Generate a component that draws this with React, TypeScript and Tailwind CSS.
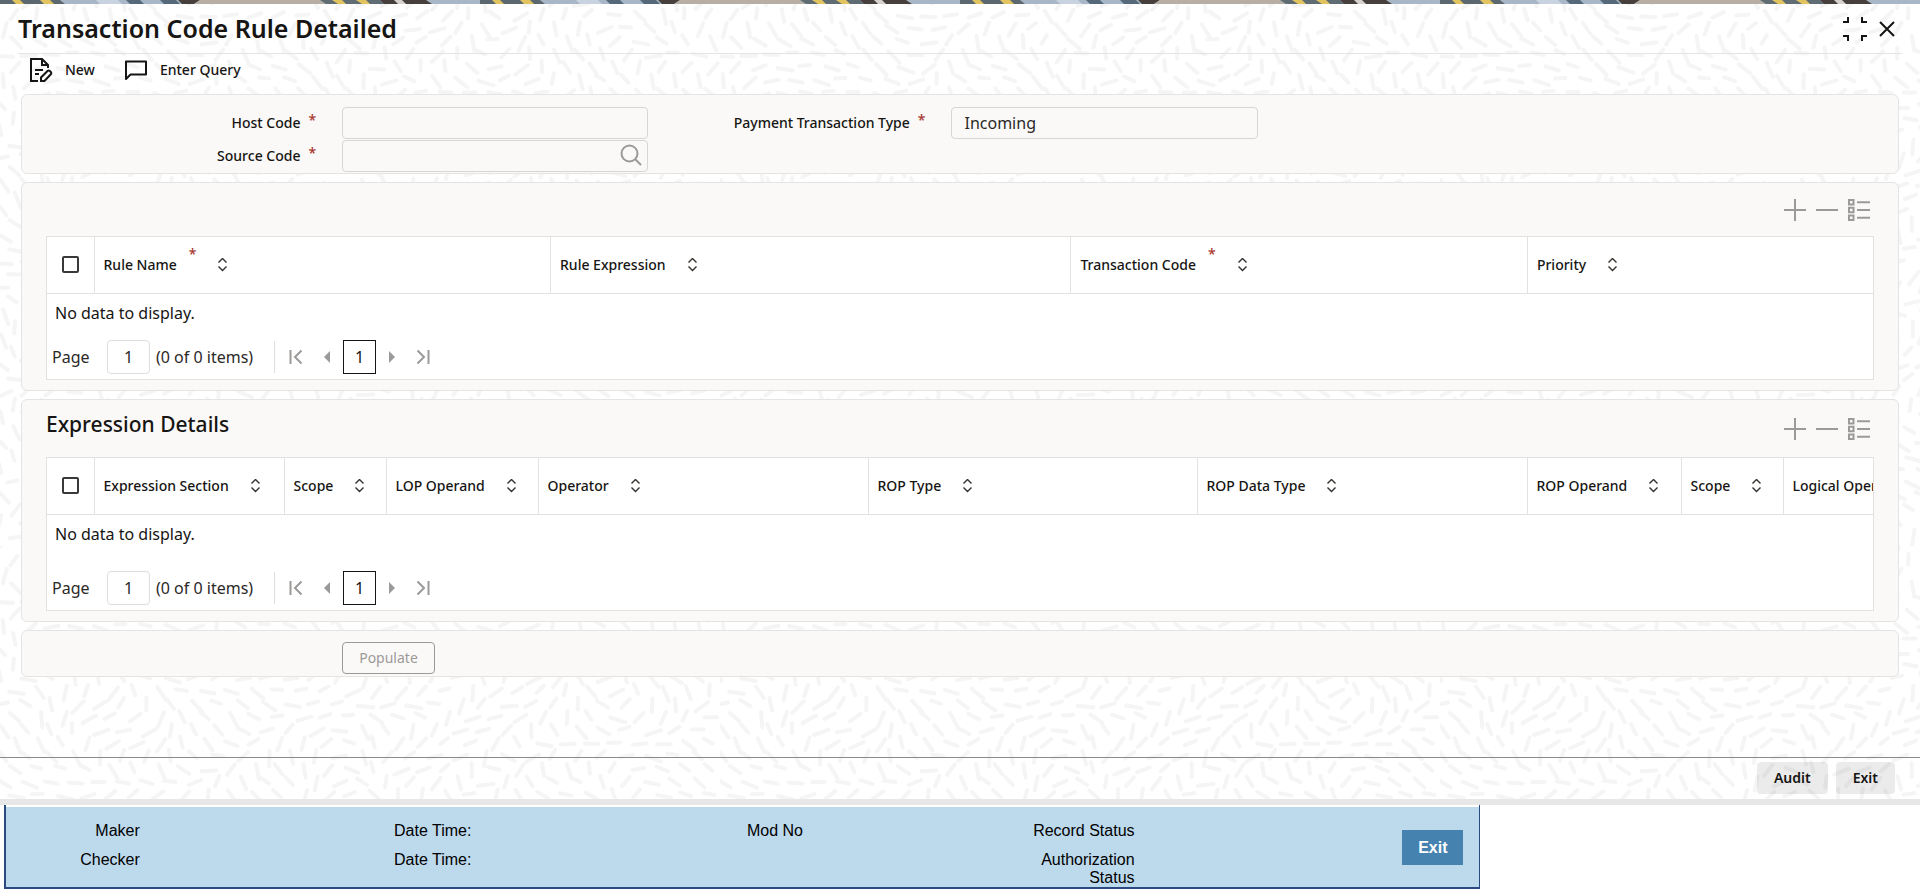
import { useId } from "react";
import type { ReactNode } from "react";

type Column = {
  label: string;
  width: string;
  required?: boolean;
};

const ruleColumns: Column[] = [
  { label: "Rule Name", width: "w-1/4", required: true },
  { label: "Rule Expression", width: "w-[28.5%]" },
  { label: "Transaction Code", width: "w-1/4", required: true },
  { label: "Priority", width: "w-auto" },
];

const expressionColumns: Column[] = [
  { label: "Expression Section", width: "w-[190px]" },
  { label: "Scope", width: "w-[102px]" },
  { label: "LOP Operand", width: "w-[152px]" },
  { label: "Operator", width: "w-[330px]" },
  { label: "ROP Type", width: "w-[329px]" },
  { label: "ROP Data Type", width: "w-[330px]" },
  { label: "ROP Operand", width: "w-[154px]" },
  { label: "Scope", width: "w-[102px]" },
  { label: "Logical Operator", width: "w-[172px]" },
];

const auditFields = [
  ["Maker", "Date Time:", "Mod No", "Record Status"],
  ["Checker", "Date Time:", "", "Authorization Status"],
];

// Short rounded dashes that follow a wavy flow, tiled over the dialog
const TILE_W = 720;
const TILE_H = 546;

function buildDashes() {
  const dashes: string[] = [];
  const stepX = 24;
  const stepY = 13;
  for (let row = 0; row < TILE_H / stepY; row++) {
    for (let col = 0; col < TILE_W / stepX; col++) {
      const seed = Math.sin(row * 127.1 + col * 311.7) * 43758.5453;
      const r = seed - Math.floor(seed);
      const x = col * stepX + (row % 2) * 12 + r * 6;
      const y = row * stepY + r * 5;
      const u = (x / TILE_W) * Math.PI * 2;
      const v = (y / TILE_H) * Math.PI * 2;
      const angle =
        1.5 * Math.sin(2 * u + Math.cos(2 * v)) + 1.4 * Math.cos(3 * v + Math.sin(3 * u)) + (r - 0.5) * 0.5;
      const len = 5 + r * 3;
      const dx = Math.cos(angle) * len;
      const dy = Math.sin(angle) * len;
      dashes.push(
        `M${(x - dx).toFixed(1)} ${(y - dy).toFixed(1)}L${(x + dx).toFixed(1)} ${(y + dy).toFixed(1)}`
      );
    }
  }
  return dashes.join("");
}

const dashPath = buildDashes();

function Texture() {
  return (
    <svg className="absolute inset-0 h-full w-full" aria-hidden="true">
      <defs>
        <pattern id="dashes" width={TILE_W} height={TILE_H} patternUnits="userSpaceOnUse">
          <path d={dashPath} stroke="#f5f5f5" strokeWidth="4" strokeLinecap="round" fill="none" />
        </pattern>
      </defs>
      <rect width="100%" height="100%" fill="url(#dashes)" />
    </svg>
  );
}

function TopStrip() {
  return (
    <svg className="block h-1 w-full" aria-hidden="true">
      <defs>
        <pattern id="strip" width="480" height="4" patternUnits="userSpaceOnUse">
          <rect width="480" height="4" fill="#a9b6c6" />
          <path d="M0 0h60l5 4H0z" fill="#5c6870" />
          <path d="M12 0h8l4 4h-8zM40 0h10l4 4H44z" fill="#e3c260" />
          <path d="M96 0h22l4 4h-22z" fill="#c9d3e0" />
          <path d="M126 0h14l4 4h-14zM160 0h16l4 4h-16z" fill="#56697a" />
          <path d="M178 0h22l-6 4h-12z" fill="#463f3c" />
          <path d="M200 0h120l6 4H194z" fill="#b9aea4" />
          <path d="M320 0h60l4 4h-58z" fill="#5f6c74" />
          <path d="M332 0h10l4 4h-8zM356 0h10l4 4h-8z" fill="#e3c260" />
          <path d="M380 0h46l6 4h-48z" fill="#463f3c" />
          <path d="M394 0h8l4 4h-8z" fill="#d5d2ce" />
        </pattern>
      </defs>
      <rect width="100%" height="4" fill="url(#strip)" />
    </svg>
  );
}

function NewIcon() {
  return (
    <svg width="24" height="26" viewBox="0 0 24 26" fill="none" stroke="#161513" strokeWidth="2">
      <path d="M9 24H2V2h11l6 6v3" />
      <path d="M13 2v6h6" />
      <path d="M6 13h8M6 17h4" />
      <path d="M12 24v-3.5l6.5-6.5a1.6 1.6 0 0 1 2.3 0l1 1a1.6 1.6 0 0 1 0 2.3L15.500 24z" />
    </svg>
  );
}

function QueryIcon() {
  return (
    <svg width="24" height="22" viewBox="0 0 24 22" fill="none" stroke="#161513" strokeWidth="2" strokeLinejoin="round">
      <path d="M2 2.500h20v13H6.500L2 20z" />
    </svg>
  );
}

function SortIcon() {
  return (
    <svg width="11" height="14" viewBox="0 0 11 14" fill="none" stroke="#33302e" strokeWidth="1.400">
      <path d="M1.500 4.500l4-4 4 4M1.500 8.500l4 4 4-4" />
    </svg>
  );
}

function Asterisk() {
  return <span className="text-sm leading-none text-[#a8382f]">*</span>;
}

function Panel({ children, className }: { children: ReactNode; className: string }) {
  return (
    <section className={`rounded-md border border-[#e5e4e2] bg-[#faf9f7] ${className}`}>{children}</section>
  );
}

function RowActions() {
  return (
    <div className="flex items-center gap-2 text-[#9c9a98]">
      <button type="button" aria-label="Add row">
        <svg width="24" height="24" viewBox="0 0 24 24" fill="none" stroke="currentColor" strokeWidth="2">
          <path d="M12 1v22M1 12h22" />
        </svg>
      </button>
      <button type="button" aria-label="Delete row">
        <svg width="24" height="24" viewBox="0 0 24 24" fill="none" stroke="currentColor" strokeWidth="2">
          <path d="M1 12h22" />
        </svg>
      </button>
      <button type="button" aria-label="Single record view">
        <svg width="24" height="24" viewBox="0 0 24 24" fill="none" stroke="currentColor" strokeWidth="2">
          <path d="M2 2h4.500v4.500H2zM2 9.800h4.500v4.500H2zM2 17.500h4.500V22H2z" />
          <path d="M10 4.300h13M10 12h13M10 19.700h13" />
        </svg>
      </button>
    </div>
  );
}

function Pager() {
  const id = useId();
  return (
    <div className="flex items-center pl-[5px] text-base text-[#2b2927]">
      <label htmlFor={id} className="w-[55px]">
        Page
      </label>
      <input
        id={id}
        defaultValue="1"
        className="h-[34px] w-[43px] rounded border border-[#dfdedc] bg-white text-center"
      />
      <span className="w-[124px] pl-1.5 whitespace-nowrap">(0 of 0 items)</span>
      <div className="flex h-8 items-center border-l border-[#dfdedc] pl-3.5 text-[#9c9a98]">
        <button type="button" aria-label="First page">
          <svg width="14" height="16" viewBox="0 0 14 16" fill="none" stroke="currentColor" strokeWidth="2">
            <path d="M1.500 1v14M12.500 1.500L6 8l6.500 6.500" />
          </svg>
        </button>
        <button type="button" aria-label="Previous page" className="pr-3 pl-5">
          <svg width="8" height="12" viewBox="0 0 8 12" fill="currentColor">
            <path d="M7 0v12L1 6z" />
          </svg>
        </button>
        <button type="button" className="h-[34px] w-[33px] border border-[#161513] bg-white text-[#161513]">
          1
        </button>
        <button type="button" aria-label="Next page" className="pr-5 pl-3">
          <svg width="8" height="12" viewBox="0 0 8 12" fill="currentColor">
            <path d="M1 0v12l6-6z" />
          </svg>
        </button>
        <button type="button" aria-label="Last page">
          <svg width="14" height="16" viewBox="0 0 14 16" fill="none" stroke="currentColor" strokeWidth="2">
            <path d="M12.500 1v14M1.500 1.500L8 8l-6.500 6.500" />
          </svg>
        </button>
      </div>
    </div>
  );
}

function DataGrid({
  columns,
  tableClass,
  bodyClass,
}: {
  columns: Column[];
  tableClass: string;
  bodyClass: string;
}) {
  return (
    <div className="overflow-hidden border border-[#e3e2e0] bg-white">
      <table className={`table-fixed border-collapse ${tableClass}`}>
        <thead>
          <tr className="h-14 border-b border-[#e3e2e0] text-left text-sm">
            <th className="w-[47px] text-center">
              <input
                type="checkbox"
                aria-label="Select all rows"
                className="mx-auto block size-[17px] appearance-none rounded-xs border-2 border-[#3b3937] bg-white"
              />
            </th>
            {columns.map((column, index) => (
              <th key={index} className={`border-l border-[#e3e2e0] pl-[9px] font-medium ${column.width}`}>
                <div className="flex items-center gap-[21px] whitespace-nowrap">
                  <span className="flex items-start gap-3">
                    <span className="py-2">{column.label}</span>
                    {column.required && <Asterisk />}
                  </span>
                  <button type="button" aria-label={`Sort by ${column.label}`}>
                    <SortIcon />
                  </button>
                </div>
              </th>
            ))}
          </tr>
        </thead>
        <tbody>
          <tr>
            <td colSpan={columns.length + 1} className={`pt-[7px] pl-2 align-top text-base ${bodyClass}`}>
              No data to display.
            </td>
          </tr>
        </tbody>
      </table>
      <div className="pb-[5px]">
        <Pager />
      </div>
    </div>
  );
}

function Field({
  label,
  value,
  lookup,
}: {
  label: string;
  value?: string;
  lookup?: boolean;
}) {
  const id = useId();
  return (
    <div className="grid grid-cols-[296fr_306fr_7fr] items-center">
      <div className="flex justify-end gap-2 pr-[26px] text-sm font-medium">
        <label htmlFor={id}>{label}</label>
        <Asterisk />
      </div>
      <div className="relative">
        <input
          id={id}
          defaultValue={value}
          className="block h-8 w-full rounded border border-[#d8d6d4] bg-transparent px-3 text-base text-[#2b2927]"
        />
        {lookup && (
          <button type="button" aria-label={`Search ${label}`} className="absolute top-1 right-1.5 text-[#9c9a98]">
            <svg width="22" height="22" viewBox="0 0 22 22" fill="none" stroke="currentColor" strokeWidth="2">
              <circle cx="9.500" cy="9.500" r="8" />
              <path d="M15 15l6 6" />
            </svg>
          </button>
        )}
      </div>
    </div>
  );
}

export default function App() {
  return (
    <div className="bg-white font-['Noto_Sans',sans-serif] text-[#161513]">
      <main className="relative border-b-[6px] border-[#e7e7e7]">
        <Texture />
        <div className="relative">
          <TopStrip />

          {/* Title bar */}
          <header className="mx-[18px] flex h-[50px] items-center justify-between border-b border-[#e5e4e2] pr-[7px]">
            <h1 className="text-[25px] font-semibold">Transaction Code Rule Detailed</h1>
            <div className="flex items-center gap-3">
              <button type="button" aria-label="Restore">
                <svg width="24" height="24" viewBox="0 0 24 24" fill="none" stroke="#161513" strokeWidth="2">
                  <path d="M0 5h5V0M19 0v5h5M0 19h5v5M24 19h-5v5" />
                </svg>
              </button>
              <button type="button" aria-label="Close">
                <svg width="16" height="16" viewBox="0 0 16 16" fill="none" stroke="#161513" strokeWidth="2">
                  <path d="M1 1l14 14M15 1L1 15" />
                </svg>
              </button>
            </div>
          </header>

          <nav className="flex h-10 items-center gap-[29px] pr-5 pb-2 pl-[29px] text-sm font-medium">
            <button type="button" className="flex items-center gap-3">
              <NewIcon />
              New
            </button>
            <button type="button" className="flex items-center gap-3">
              <QueryIcon />
              Enter Query
            </button>
          </nav>

          <div className="mx-[21px] flex flex-col gap-2">
            <Panel className="px-6 pt-3 pb-px">
              <div className="grid grid-cols-3 gap-y-px">
                <Field label="Host Code" />
                <Field label="Payment Transaction Type" value="Incoming" />
                <div />
                <Field label="Source Code" lookup />
              </div>
            </Panel>

            <Panel className="px-6 pb-2.5">
              <div className="flex h-[53px] items-center justify-end pr-[3px]">
                <RowActions />
              </div>
              <DataGrid columns={ruleColumns} tableClass="w-full" bodyClass="h-[47px]" />
            </Panel>

            <Panel className="px-6 pb-2.5">
              <div className="flex h-[57px] items-center justify-between pr-[3px]">
                <h2 className="pb-2 text-[21px] font-medium">Expression Details</h2>
                <RowActions />
              </div>
              <DataGrid columns={expressionColumns} tableClass="w-[1908px]" bodyClass="h-[57px]" />
            </Panel>

            <Panel className="px-6 pt-[11px] pb-0.5">
              <div className="grid grid-cols-3">
                <div className="grid grid-cols-[296fr_313fr]">
                  <button
                    type="button"
                    className="col-start-2 h-8 justify-self-start rounded border border-[#9c9a98] px-4 text-sm text-[#9c9a98]"
                  >
                    Populate
                  </button>
                </div>
              </div>
            </Panel>
          </div>

          <footer className="mt-20 flex h-[42px] items-start justify-end gap-2 border-t border-[#8b8989] pt-1 pr-[25px] text-sm font-semibold">
            <button type="button" className="h-8 rounded bg-black/8 px-[17px]">
              Audit
            </button>
            <button type="button" className="h-8 rounded bg-black/8 px-[17px]">
              Exit
            </button>
          </footer>
        </div>
      </main>

      {/* Audit trail */}
      <div className="ml-1 w-[76.9%] border-r border-b-2 border-l-2 border-[#2b4a80] bg-[#bdd9ec] font-['Liberation_Sans',sans-serif] text-base leading-[18px] text-black shadow-[0_3px_0_#e3eaf6]">
        <div className="flex items-start justify-between border-t-2 border-white pr-4">
          <div className="w-[91%] pt-[15px]">
            {auditFields.map((row, index) => (
              <dl key={index} className="grid grid-cols-4 pb-[11px] last:pb-0">
                {row.map((name, cell) => (
                  <div key={cell} className="grid grid-cols-[134fr_198fr] text-right">
                    <dt>{name}</dt>
                    <dd />
                  </div>
                ))}
              </dl>
            ))}
          </div>
          <button type="button" className="mt-[23px] h-[35px] bg-[#4682b0] px-4 font-bold text-white">
            Exit
          </button>
        </div>
      </div>
    </div>
  );
}
